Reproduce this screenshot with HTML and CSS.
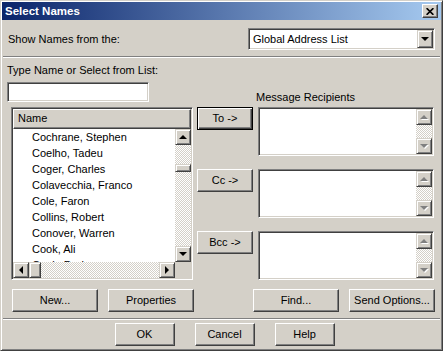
FILE: index.html
```html
<!DOCTYPE html>
<html lang="en">
<head>
  <meta charset="UTF-8" />
  <title>Select Names</title>
  <link rel="stylesheet" href="styles.css">
</head>
<body>
  <div class="window">
    <div class="titlebar">
      <span class="title">Select Names</span>
      <button class="close" aria-label="Close">
        <svg width="8" height="7" viewBox="0 0 8 7"><path d="M0.6 0.2 7.4 6.8M7.4 0.2 0.6 6.8" stroke="#000" stroke-width="1.7" fill="none"/></svg>
      </button>
    </div>

    <div class="source">
      <span>Show Names from the:</span>
      <div class="combo">
        <span class="combo-text">Global Address List</span>
        <span class="sb-btn"><i class="arr down"></i></span>
      </div>
    </div>

    <div class="rule"></div>

    <div class="picker">
      <div class="search">
        <span>Type Name or Select from List:</span>
        <div class="field"></div>
      </div>
      <div class="recip-label">Message Recipients</div>

      <div class="names">
        <div class="names-head">Name</div>
        <ul class="names-body">
          <li>Cochrane, Stephen</li>
          <li>Coelho, Tadeu</li>
          <li>Coger, Charles</li>
          <li>Colavecchia, Franco</li>
          <li>Cole, Faron</li>
          <li>Collins, Robert</li>
          <li>Conover, Warren</li>
          <li>Cook, Ali</li>
          <li>Cook, Doris</li>
        </ul>
        <div class="vscroll">
          <span class="sb-btn"><i class="arr up"></i></span>
          <div class="track"><div class="thumb v"></div></div>
          <span class="sb-btn"><i class="arr down"></i></span>
        </div>
        <div class="hscroll">
          <span class="sb-btn"><i class="arr left"></i></span>
          <div class="track"><div class="thumb h"></div></div>
          <span class="sb-btn"><i class="arr right"></i></span>
        </div>
        <div class="corner"></div>
      </div>

      <div class="moves">
        <button class="btn default">To -&gt;</button>
        <button class="btn">Cc -&gt;</button>
        <button class="btn">Bcc -&gt;</button>
      </div>

      <div class="recipients">
        <div class="rbox">
          <div class="rbox-list"></div>
          <div class="vscroll off">
            <span class="sb-btn"><i class="arr up"></i></span>
            <div class="track"></div>
            <span class="sb-btn"><i class="arr down"></i></span>
          </div>
        </div>
        <div class="rbox">
          <div class="rbox-list"></div>
          <div class="vscroll off">
            <span class="sb-btn"><i class="arr up"></i></span>
            <div class="track"></div>
            <span class="sb-btn"><i class="arr down"></i></span>
          </div>
        </div>
        <div class="rbox">
          <div class="rbox-list"></div>
          <div class="vscroll off">
            <span class="sb-btn"><i class="arr up"></i></span>
            <div class="track"></div>
            <span class="sb-btn"><i class="arr down"></i></span>
          </div>
        </div>
      </div>
    </div>

    <div class="actions">
      <div class="group">
        <button class="btn wide">New...</button>
        <button class="btn wide">Properties</button>
      </div>
      <div class="group">
        <button class="btn wide">Find...</button>
        <button class="btn wide">Send Options...</button>
      </div>
    </div>

    <div class="rule"></div>

    <div class="footer">
      <button class="btn small">OK</button>
      <button class="btn small">Cancel</button>
      <button class="btn small">Help</button>
    </div>
  </div>
</body>
</html>
```

FILE: styles.css
```css
body { margin: 0; font-family: "Liberation Sans", Arial, sans-serif; font-size: 11px; line-height: 13px; color: #000; background: #d4d0c8; }
.window { box-sizing: border-box; width: 443px; height: 351px; background: #d4d0c8; border: 1px solid; border-color: #d4d0c8 #404040 #404040 #d4d0c8; box-shadow: inset 1px 1px #fff, inset -1px -1px #808080; padding: 1px; }

.titlebar { height: 18px; display: flex; align-items: center; justify-content: space-between; background: linear-gradient(to right, #0a246a, #a6caf0); padding: 0 3px 0 3px; }
.title { color: #fff; font-weight: bold; font-size: 11.5px; }
.close { box-sizing: border-box; width: 16px; height: 14px; padding: 0; display: flex; align-items: center; justify-content: center; background: #d4d0c8; border: 1px solid; border-color: #fff #404040 #404040 #fff; box-shadow: inset -1px -1px #808080; }

.source { display: flex; align-items: center; justify-content: space-between; margin-top: 8px; padding: 0 6px; height: 22px; }
.combo { box-sizing: border-box; width: 187px; height: 22px; display: flex; align-items: center; background: #fff; border: 1px solid; border-color: #808080 #fff #fff #808080; box-shadow: inset 1px 1px #404040, inset -1px -1px #d4d0c8; padding: 1px; }
.combo-text { flex: 1; padding-left: 3px; }
.combo .sb-btn { height: 18px; }

.rule { height: 0; border-top: 1px solid #808080; border-bottom: 1px solid #fff; margin: 6px 1px 0; }

.picker { display: grid; grid-template-columns: 190px 61px 176px; grid-template-rows: auto auto; row-gap: 5px; padding-left: 5px; margin-top: 6px; }
.search { grid-column: 1; grid-row: 1; display: flex; flex-direction: column; gap: 5px; }
.field { box-sizing: border-box; width: 142px; height: 20px; background: #fff; border: 1px solid; border-color: #808080 #fff #fff #808080; box-shadow: inset 1px 1px #404040, inset -1px -1px #d4d0c8; }
.recip-label { grid-column: 3; grid-row: 1; align-self: end; white-space: nowrap; margin: 0 0 -2px -2px; }

.names { grid-column: 1; grid-row: 2; box-sizing: border-box; width: 182px; height: 173px; margin-left: 4px; border: 1px solid; border-color: #808080 #fff #fff #808080; box-shadow: inset 1px 1px #404040, inset -1px -1px #d4d0c8; padding: 1px; display: grid; grid-template-columns: 1fr 16px; grid-template-rows: 20px 1fr 16px; }
.names-head { grid-column: 1 / 3; box-sizing: border-box; background: #d4d0c8; border: 1px solid; border-color: #fff #404040 #404040 #fff; box-shadow: inset -1px -1px #808080; padding-left: 4px; line-height: 17px; }
.names-body { grid-column: 1; grid-row: 2; list-style: none; margin: 0; padding: 0 0 0 19px; background: #fff; overflow: hidden; }
.names-body li { height: 16px; line-height: 16px; white-space: nowrap; }
.names .vscroll { grid-column: 2; grid-row: 2; }
.names .hscroll { grid-column: 1; grid-row: 3; }
.corner { grid-column: 2; grid-row: 3; background: #d4d0c8; }

.sb-btn { box-sizing: border-box; flex: none; width: 16px; height: 16px; display: flex; align-items: center; justify-content: center; background: #d4d0c8; border: 1px solid; border-color: #d4d0c8 #404040 #404040 #d4d0c8; box-shadow: inset 1px 1px #fff, inset -1px -1px #808080; }
.arr { width: 0; height: 0; border: 4px solid transparent; }
.arr.up { border-top-width: 0; border-bottom-color: #000; }
.arr.down { border-bottom-width: 0; border-top-color: #000; }
.arr.left { border-left-width: 0; border-right-color: #000; }
.arr.right { border-right-width: 0; border-left-color: #000; }
.off .arr.up { border-bottom-color: #808080; filter: drop-shadow(1px 1px 0 #fff); }
.off .arr.down { border-top-color: #808080; filter: drop-shadow(1px 1px 0 #fff); }

.vscroll { display: flex; flex-direction: column; min-height: 0; }
.hscroll { display: flex; min-width: 0; }
.track { flex: 1; min-width: 0; min-height: 0; background: repeating-conic-gradient(#d4d0c8 0 25%, #fff 0 50%) 0 0 / 2px 2px; }
.thumb { box-sizing: border-box; background: #d4d0c8; border: 1px solid; border-color: #d4d0c8 #404040 #404040 #d4d0c8; box-shadow: inset 1px 1px #fff, inset -1px -1px #808080; }
.thumb.v { height: 8px; margin-top: 19px; }
.thumb.h { width: 12px; height: 16px; }

.moves { grid-column: 2; grid-row: 2; display: flex; flex-direction: column; gap: 39px; }
.btn { box-sizing: border-box; height: 23px; padding: 0; font: inherit; color: #000; background: #d4d0c8; border: 1px solid; border-color: #fff #404040 #404040 #fff; box-shadow: inset -1px -1px #808080; }
.moves .btn { width: 56px; }
.btn.default { border-color: #000; box-shadow: inset 1px 1px #fff, inset -1px -1px #404040, inset -2px -2px #808080; }

.recipients { grid-column: 3; grid-row: 2; display: flex; flex-direction: column; gap: 13px; }
.rbox { box-sizing: border-box; width: 176px; height: 49px; display: flex; border: 1px solid; border-color: #808080 #fff #fff #808080; box-shadow: inset 1px 1px #404040, inset -1px -1px #d4d0c8; padding: 1px; }
.rbox-list { flex: 1; background: #fff; }

.actions { display: flex; justify-content: space-between; margin-top: 9px; padding: 0 6px 0 10px; }
.group { display: flex; gap: 10px; }
.btn.wide { width: 86px; }

.footer { display: flex; justify-content: center; gap: 20px; margin-top: 3px; padding-left: 6px; }
.btn.small { width: 60px; }
```
